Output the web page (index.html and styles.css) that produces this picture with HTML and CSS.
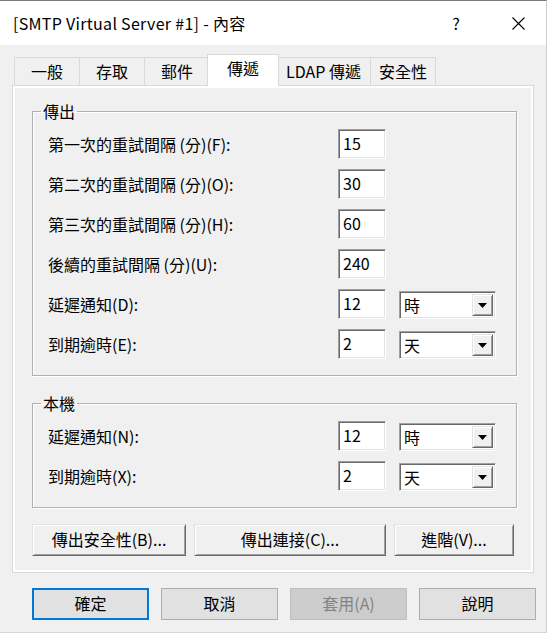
FILE: index.html
```html
<!DOCTYPE html>
<html lang="zh-Hant">
<head>
<meta charset="utf-8">
<title>[SMTP Virtual Server #1] - 內容</title>
<link rel="stylesheet" href="styles.css">
</head>
<body>
<div class="window">
  <div class="titlebar">
    <span class="title">[SMTP Virtual Server #1] - 內容</span>
    <span class="help">?</span>
    <span class="close"><svg width="13" height="13" viewBox="0 0 13 13"><path d="M0.5 0.5 L12.5 12.5 M12.5 0.5 L0.5 12.5" stroke="#000" stroke-width="1.1" fill="none"/></svg></span>
  </div>
  <div class="content">
    <div class="tabs">
      <div class="tab">一般</div>
      <div class="tab">存取</div>
      <div class="tab">郵件</div>
      <div class="tab active">傳遞</div>
      <div class="tab tab-wide">LDAP 傳遞</div>
      <div class="tab tab-last">安全性</div>
    </div>
    <div class="panel">
      <div class="page">
        <fieldset class="group">
          <legend>傳出</legend>
          <div class="rows">
            <div class="row"><span class="label">第一次的重試間隔 (分)(F):</span><div class="edit">15</div></div>
            <div class="row"><span class="label">第二次的重試間隔 (分)(O):</span><div class="edit">30</div></div>
            <div class="row"><span class="label">第三次的重試間隔 (分)(H):</span><div class="edit">60</div></div>
            <div class="row"><span class="label">後續的重試間隔 (分)(U):</span><div class="edit">240</div></div>
            <div class="row"><span class="label">延遲通知(D):</span><div class="edit">12</div>
              <div class="combo"><span class="combo-text">時</span><span class="combo-btn"><svg width="9" height="5" viewBox="0 0 9 5"><polygon points="0,0 9,0 4.5,5" fill="#000"/></svg></span></div></div>
            <div class="row"><span class="label">到期逾時(E):</span><div class="edit">2</div>
              <div class="combo"><span class="combo-text">天</span><span class="combo-btn"><svg width="9" height="5" viewBox="0 0 9 5"><polygon points="0,0 9,0 4.5,5" fill="#000"/></svg></span></div></div>
          </div>
        </fieldset>
        <fieldset class="group group-local">
          <legend>本機</legend>
          <div class="rows">
            <div class="row"><span class="label">延遲通知(N):</span><div class="edit">12</div>
              <div class="combo"><span class="combo-text">時</span><span class="combo-btn"><svg width="9" height="5" viewBox="0 0 9 5"><polygon points="0,0 9,0 4.5,5" fill="#000"/></svg></span></div></div>
            <div class="row"><span class="label">到期逾時(X):</span><div class="edit">2</div>
              <div class="combo"><span class="combo-text">天</span><span class="combo-btn"><svg width="9" height="5" viewBox="0 0 9 5"><polygon points="0,0 9,0 4.5,5" fill="#000"/></svg></span></div></div>
          </div>
        </fieldset>
        <div class="page-buttons">
          <button class="btn3d btn-sec">傳出安全性(B)...</button>
          <button class="btn3d btn-conn">傳出連接(C)...</button>
          <button class="btn3d btn-adv">進階(V)...</button>
        </div>
      </div>
    </div>
    <div class="dialog-buttons">
      <button class="btn default">確定</button>
      <button class="btn">取消</button>
      <button class="btn disabled">套用(A)</button>
      <button class="btn">說明</button>
    </div>
  </div>
</div>
</body>
</html>
```
FILE: styles.css
```css
* { box-sizing: border-box; }
html, body { margin: 0; padding: 0; }
body {
  background: #ffffff;
  font-family: "Noto Sans CJK TC", "Noto Sans", sans-serif;
  font-size: 16px;
  color: #000;
}
.window {
  width: 547px;
  height: 633px;
  border-top: 1px solid #7a7a7a;
  border-right: 1px solid #cfcfcf;
  border-bottom: 1px solid #d6d6d6;
  background: #f0f0f0;
  display: flex;
  flex-direction: column;
}
.titlebar {
  height: 44px;
  background: #fff;
  display: flex;
  align-items: center;
  padding-left: 13px;
  padding-right: 18px;
  flex-shrink: 0;
}
.title { flex: 1; line-height: 20px; white-space: nowrap; letter-spacing: 0.3px; }
.help { width: 20px; text-align: center; line-height: 20px; }
.close { width: 20px; margin-left: 42px; display: flex; justify-content: center; align-items: center; }
.content { padding: 9px 0 0 12px; }
.tabs {
  display: flex;
  align-items: flex-end;
  height: 32px;
  margin: 0 0 -1px 2px;
  position: relative;
  z-index: 1;
}
.tab {
  height: 28px;
  margin-bottom: 1px;
  min-width: 66px;
  padding: 0 8px 2px;
  margin-right: -1px;
  border: 1px solid #d9d9d9;
  border-bottom: 0;
  background: #f0f0f0;
  display: flex;
  align-items: center;
  justify-content: center;
  white-space: nowrap;
  line-height: 20px;
}
.tab-wide { padding: 0 9px 2px; }
.tab-last { min-width: 64px; }
.tab.active {
  height: 32px;
  margin-bottom: 0;
  background: #fff;
  min-width: 72px;
  margin-left: -2px;
  margin-right: -3px;
  padding-bottom: 5px;
  position: relative;
  z-index: 2;
}
.panel {
  width: 522px;
  height: 488px;
  border: 1px solid #d9d9d9;
  background: #fff;
  padding: 2px;
  position: relative;
}
.page {
  height: 100%;
  background: #f0f0f0;
  padding: 13px 0 0 17px;
}
.group {
  width: 485px;
  margin: 0;
  padding: 8px 0 16px 15px;
  border: 1px solid #b0b0b0;
  box-shadow: inset 1px 1px 0 #fff, 1px 1px 0 #fff;
  min-width: 0;
}
.group legend {
  padding: 0 2px;
  margin-left: -7px;
  line-height: 20px;
}
.group-local { margin-top: 17px; }
.rows {
  display: flex;
  flex-direction: column;
  gap: 10px;
}
.row {
  display: flex;
  align-items: center;
  height: 30px;
}
.label {
  width: 290px;
  flex: 0 0 290px;
  line-height: 20px;
  white-space: nowrap;
}
.edit {
  flex: 0 0 48px;
  width: 48px;
  height: 30px;
  background: #fff;
  border: 1px solid;
  border-color: #a0a0a0 #fff #fff #a0a0a0;
  box-shadow: inset 1px 1px 0 #696969, inset -1px -1px 0 #e3e3e3;
  padding: 0 0 2px 4px;
  display: flex;
  align-items: center;
  line-height: 20px;
}
.combo {
  flex: 0 0 97px;
  width: 97px;
  height: 28px;
  margin-left: 13px;
  align-self: flex-end;
  background: #fff;
  border: 1px solid;
  border-color: #a0a0a0 #fff #fff #a0a0a0;
  box-shadow: inset 1px 1px 0 #696969, inset -1px -1px 0 #e3e3e3;
  padding: 2px;
  display: flex;
}
.combo-text { flex: 1; padding-left: 2px; line-height: 22px; }
.combo-btn {
  width: 21px;
  background: #f0f0f0;
  border: 1px solid;
  border-color: #e3e3e3 #696969 #696969 #e3e3e3;
  box-shadow: inset 1px 1px 0 #fff, inset -1px -1px 0 #a0a0a0;
  display: flex;
  align-items: center;
  justify-content: center;
}
.page-buttons {
  display: flex;
  gap: 8px;
  margin-top: 16px;
}
button {
  font-family: inherit;
  font-size: 16px;
  color: #000;
  margin: 0;
  padding: 0 0 2px;
  line-height: 20px;
  white-space: nowrap;
}
.btn3d {
  height: 32px;
  background: #f0f0f0;
  border: 1px solid;
  border-color: #e3e3e3 #696969 #696969 #e3e3e3;
  box-shadow: inset 1px 1px 0 #fff, inset -1px -1px 0 #a0a0a0;
}
.btn-sec { width: 154px; }
.btn-conn { width: 192px; }
.btn-adv { width: 120px; }
.dialog-buttons {
  display: flex;
  gap: 12px;
  margin-top: 15px;
  padding-left: 20px;
}
.btn {
  width: 117px;
  height: 32px;
  background: #e1e1e1;
  border: 1px solid #adadad;
}
.btn.default {
  border-color: #0078d7;
  box-shadow: inset 0 0 0 1px #0078d7;
}
.btn.disabled {
  background: #cccccc;
  border-color: #bfbfbf;
  color: #838383;
}
```
